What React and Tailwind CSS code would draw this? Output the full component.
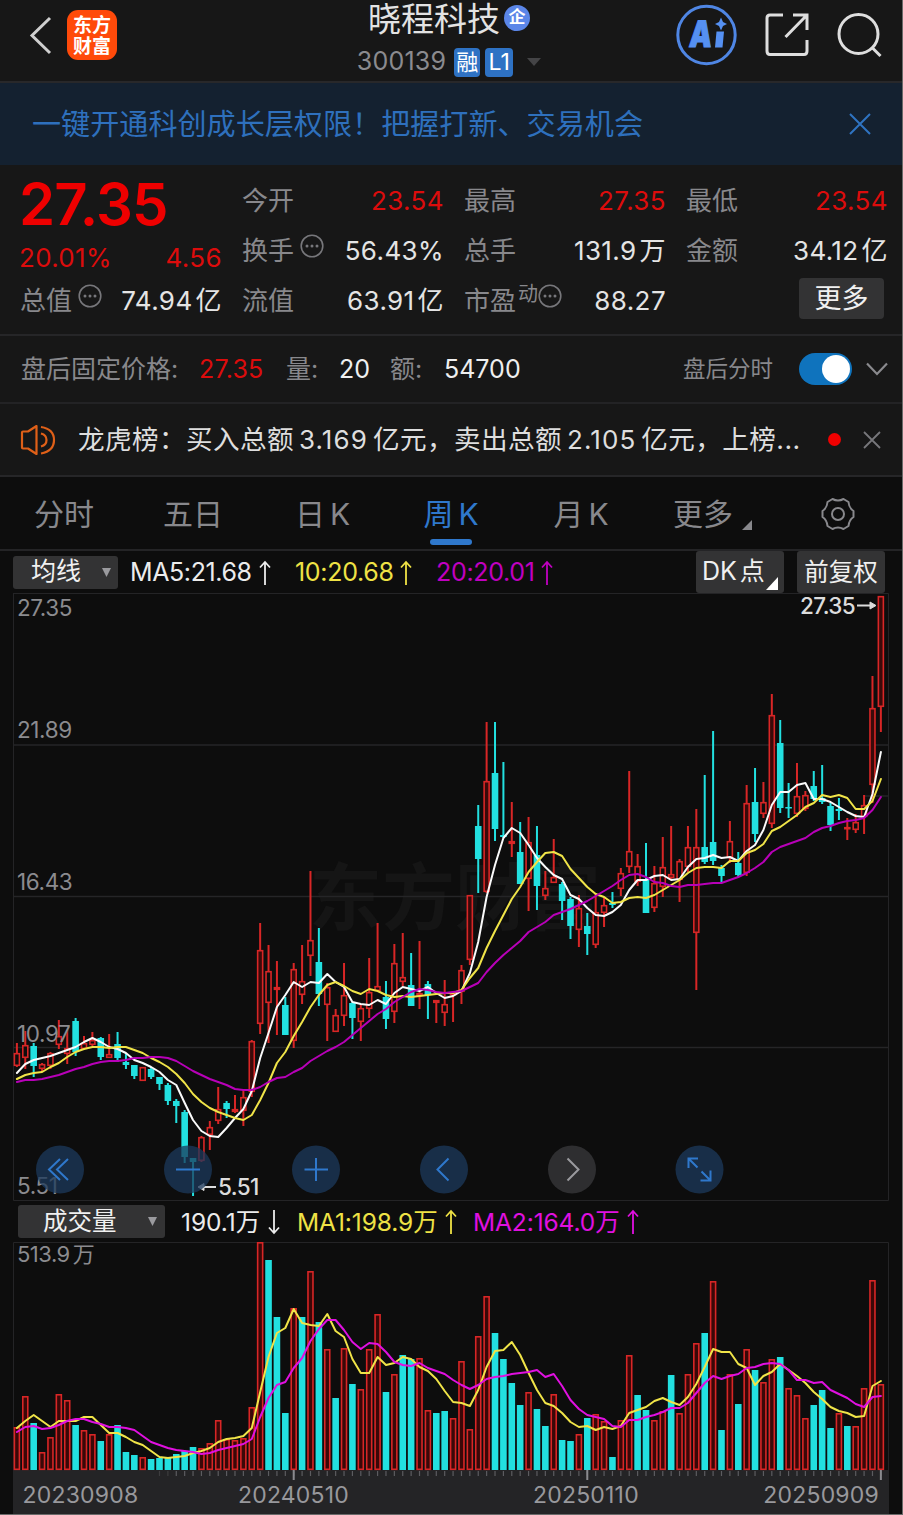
import React from 'react';

const RED = '#d82626';
const CYAN = '#22e0e0';
const STEP = 8.388;
const FIRST = 16.9;
const BASE = 1470;

const xOf = (i) => FIRST + i * STEP;

// [up?, high, bodyTop, bodyBottom, low]
const candles = [
  [1, 1043, 1053, 1066, 1067], [1, 1031, 1045, 1058, 1069], [0, 1043, 1046, 1066, 1077], [1, 1063, 1064, 1069, 1071],
  [1, 1052, 1053, 1066, 1069], [1, 1020, 1036, 1045, 1049], [1, 1030, 1048, 1054, 1064], [0, 1018, 1021, 1052, 1056],
  [1, 1036, 1043, 1049, 1050], [1, 1032, 1040, 1045, 1046], [0, 1037, 1038, 1057, 1060], [1, 1034, 1054, 1058, 1058],
  [0, 1032, 1044, 1058, 1062], [0, 1053, 1062, 1065, 1069], [0, 1065, 1065, 1076, 1079], [1, 1067, 1067, 1081, 1081],
  [0, 1067, 1069, 1077, 1079], [0, 1077, 1077, 1084, 1090], [0, 1083, 1085, 1101, 1105], [0, 1099, 1101, 1106, 1123],
  [0, 1110, 1112, 1157, 1163], [0, 1158, 1158, 1162, 1196], [1, 1136, 1137, 1161, 1162], [1, 1121, 1127, 1135, 1150],
  [1, 1087, 1109, 1121, 1124], [0, 1101, 1103, 1109, 1118], [1, 1095, 1109, 1112, 1113], [1, 1090, 1097, 1111, 1126],
  [1, 1040, 1041, 1092, 1097], [1, 923, 950, 1024, 1034], [1, 945, 971, 1003, 1043], [1, 961, 987, 990, 1035],
  [0, 997, 1005, 1035, 1035], [1, 963, 969, 1041, 1048], [1, 945, 981, 995, 1004], [1, 871, 940, 956, 976],
  [0, 928, 962, 994, 1006], [1, 983, 987, 1005, 1041], [1, 1009, 1015, 1032, 1032], [1, 963, 995, 1016, 1026],
  [0, 1002, 1003, 1018, 1039], [1, 1004, 1008, 1022, 1041], [1, 958, 992, 1009, 1018], [1, 923, 986, 991, 991],
  [0, 981, 997, 1019, 1029], [1, 944, 963, 1012, 1023], [1, 933, 977, 982, 986], [0, 953, 985, 1006, 1006],
  [1, 941, 993, 996, 1009], [0, 981, 984, 995, 1019], [1, 1000, 1000, 1003, 1023], [1, 980, 1004, 1013, 1026],
  [1, 992, 993, 995, 1022], [1, 965, 970, 992, 1004], [1, 895, 895, 960, 965], [0, 805, 826, 859, 893],
  [1, 722, 781, 892, 893], [0, 722, 773, 829, 841], [0, 762, 835, 837, 838], [1, 802, 841, 844, 857],
  [0, 822, 852, 884, 884], [1, 817, 842, 879, 911], [0, 826, 855, 886, 910], [1, 871, 888, 896, 900],
  [1, 839, 877, 883, 883], [0, 882, 884, 901, 920], [0, 897, 899, 926, 939], [1, 895, 908, 930, 947],
  [0, 913, 926, 934, 955], [1, 893, 912, 945, 948], [1, 897, 905, 913, 927], [0, 892, 903, 905, 908],
  [1, 868, 873, 889, 896], [1, 771, 851, 867, 873], [1, 854, 866, 882, 886], [0, 843, 880, 913, 913],
  [1, 866, 883, 908, 912], [1, 837, 867, 887, 897], [1, 826, 874, 878, 880], [1, 859, 861, 880, 902],
  [1, 826, 847, 867, 872], [1, 809, 847, 933, 990], [0, 775, 847, 862, 864], [0, 731, 842, 861, 865],
  [0, 865, 868, 876, 882], [1, 821, 841, 858, 863], [0, 852, 863, 875, 877], [1, 785, 803, 873, 876],
  [0, 768, 802, 834, 842], [1, 782, 802, 814, 818], [1, 694, 715, 824, 828], [0, 720, 743, 808, 813],
  [0, 783, 807, 808, 818], [1, 763, 796, 814, 817], [1, 791, 795, 809, 811], [0, 771, 786, 799, 801],
  [0, 765, 798, 802, 804], [0, 803, 806, 825, 831], [0, 798, 809, 811, 820], [1, 818, 827, 829, 840],
  [1, 814, 822, 830, 833], [1, 795, 805, 817, 834], [1, 676, 708, 785, 803], [1, 596, 596, 707, 732],
];

const ma5 = [
  1073, 1064, 1060, 1058, 1056, 1053, 1050, 1047, 1042, 1038, 1042, 1047, 1049, 1053, 1060, 1063, 1067, 1072, 1080, 1085,
  1103, 1120, 1131, 1136, 1137, 1128, 1118, 1109, 1091, 1058, 1033, 1007, 995, 982, 987, 982, 983, 974, 982, 987,
  1002, 1004, 1005, 1000, 1004, 993, 987, 989, 991, 987, 993, 998, 996, 991, 973, 942, 897, 865, 838, 828,
  833, 845, 858, 867, 875, 879, 895, 899, 908, 915, 916, 912, 905, 890, 880, 880, 876, 875, 880, 879,
  867, 859, 858, 855, 858, 857, 861, 851, 845, 830, 805, 792, 792, 785, 783, 799, 799, 802, 807, 812,
  816, 817, 794, 752,
];
const ma10 = [
  1079, 1075, 1073, 1072, 1067, 1063, 1057, 1052, 1049, 1047, 1047, 1048, 1047, 1047, 1050, 1053, 1058, 1062, 1067, 1074,
  1083, 1094, 1102, 1108, 1112, 1115, 1118, 1120, 1115, 1100, 1083, 1063, 1052, 1036, 1022, 1007, 995, 985, 982, 986,
  991, 994, 989, 991, 995, 997, 996, 997, 996, 995, 994, 993, 993, 990, 978, 968, 948, 931, 915, 899,
  887, 872, 862, 853, 852, 856, 869, 878, 887, 894, 897, 903, 902, 898, 897, 898, 895, 890, 885, 880,
  873, 868, 867, 867, 868, 861, 861, 853, 850, 844, 831, 827, 821, 815, 807, 803, 795, 797, 795, 798,
  809, 809, 801, 779,
];
const ma20 = [
  1082, 1080, 1080, 1079, 1077, 1075, 1072, 1069, 1067, 1064, 1062, 1061, 1061, 1060, 1058, 1058, 1057, 1057, 1058, 1061,
  1066, 1071, 1075, 1079, 1082, 1085, 1089, 1090, 1090, 1087, 1082, 1078, 1077, 1072, 1068, 1061, 1056, 1051, 1047, 1042,
  1035, 1028, 1021, 1014, 1009, 1002, 997, 992, 989, 990, 992, 993, 992, 991, 987, 983, 972, 963, 955, 948,
  941, 932, 927, 922, 915, 912, 909, 905, 901, 896, 891, 886, 880, 875, 874, 877, 882, 883, 886, 887,
  885, 885, 884, 883, 883, 880, 877, 873, 868, 862, 852, 847, 844, 841, 838, 832, 828, 826, 823, 821,
  820, 818, 810, 797,
];

// [up?, top]
const volumes = [
  [1, 1427], [1, 1396], [0, 1423], [1, 1452], [1, 1437], [1, 1394], [1, 1400], [0, 1425], [1, 1430], [1, 1434],
  [0, 1441], [1, 1434], [0, 1425], [0, 1452], [0, 1455], [1, 1457], [0, 1459], [0, 1458], [0, 1458], [0, 1454],
  [0, 1451], [0, 1447], [1, 1448], [1, 1443], [1, 1420], [1, 1439], [1, 1440], [1, 1438], [1, 1407], [1, 1242],
  [0, 1260], [0, 1317], [0, 1413], [1, 1308], [0, 1317], [1, 1271], [0, 1322], [1, 1349], [0, 1398], [1, 1348],
  [0, 1384], [1, 1389], [1, 1349], [1, 1314], [0, 1392], [1, 1374], [0, 1355], [0, 1359], [1, 1358], [1, 1410],
  [0, 1413], [0, 1411], [1, 1418], [1, 1361], [1, 1429], [1, 1336], [1, 1296], [0, 1333], [0, 1359], [0, 1383],
  [0, 1405], [1, 1392], [0, 1409], [0, 1426], [1, 1394], [0, 1440], [0, 1441], [1, 1434], [0, 1418], [1, 1414],
  [1, 1421], [0, 1457], [1, 1420], [1, 1355], [0, 1395], [0, 1410], [1, 1420], [1, 1411], [0, 1375], [1, 1413],
  [1, 1374], [1, 1343], [0, 1333], [1, 1281], [0, 1430], [1, 1374], [0, 1404], [1, 1349], [0, 1370], [1, 1382],
  [1, 1359], [0, 1357], [1, 1388], [1, 1395], [1, 1418], [0, 1405], [0, 1390], [0, 1428], [1, 1413], [0, 1426],
  [1, 1426], [1, 1388], [1, 1280], [1, 1384],
];
const volMa1 = [
  1428, 1421, 1415, 1421, 1427, 1421, 1421, 1421, 1417, 1417, 1425, 1433, 1433, 1437, 1442, 1445, 1451, 1457, 1458, 1457,
  1456, 1453, 1451, 1448, 1442, 1439, 1438, 1436, 1428, 1392, 1357, 1333, 1328, 1309, 1323, 1325, 1326, 1314, 1331, 1337,
  1359, 1373, 1373, 1357, 1365, 1363, 1357, 1359, 1367, 1371, 1379, 1391, 1402, 1403, 1406, 1390, 1367, 1351, 1350, 1342,
  1355, 1373, 1390, 1403, 1406, 1413, 1422, 1427, 1426, 1430, 1427, 1429, 1426, 1413, 1410, 1407, 1401, 1398, 1402, 1405,
  1397, 1384, 1367, 1349, 1352, 1352, 1364, 1368, 1385, 1376, 1372, 1364, 1370, 1376, 1383, 1392, 1399, 1407, 1411, 1413,
  1417, 1416, 1386, 1381,
];
const volMa2 = [
  1432, 1427, 1426, 1429, 1428, 1425, 1421, 1419, 1419, 1422, 1424, 1427, 1427, 1428, 1430, 1436, 1442, 1445, 1448, 1450,
  1451, 1452, 1454, 1453, 1450, 1448, 1446, 1444, 1439, 1417, 1398, 1385, 1382, 1368, 1358, 1341, 1329, 1320, 1320, 1330,
  1342, 1349, 1343, 1344, 1352, 1362, 1365, 1366, 1363, 1368, 1371, 1374, 1380, 1385, 1389, 1385, 1379, 1377, 1376, 1374,
  1373, 1372, 1370, 1377, 1374, 1386, 1400, 1409, 1415, 1417, 1419, 1426, 1427, 1420, 1420, 1417, 1415, 1412, 1408, 1408,
  1403, 1393, 1383, 1376, 1379, 1376, 1374, 1368, 1367, 1364, 1363, 1364, 1370, 1380, 1380, 1383, 1382, 1390, 1394, 1398,
  1404, 1407, 1397, 1396,
];

const linePoints = (arr) => arr.map((y, i) => `${xOf(i).toFixed(1)},${y}`).join(' ');

function Line({ data, color }) {
  return (
    <polyline points={linePoints(data)} fill="none" stroke={color} strokeWidth="2" strokeLinejoin="round" strokeLinecap="round" />
  );
}

function Candle({ i, data }) {
  const [up, high, top, bottom, low] = data;
  const x = xOf(i);
  if (!up) {
    return (
      <g fill={CYAN}>
        <rect x={x - 1} y={high} width="2" height={Math.max(low - high, 1)} />
        <rect x={x - 3.3} y={top} width="6.6" height={Math.max(bottom - top, 1.5)} />
      </g>
    );
  }
  return (
    <g stroke={RED}>
      <path d={`M${x} ${high}V${top}M${x} ${bottom}V${low}`} strokeWidth="2" />
      <rect
        x={x - 2.5}
        y={top + 0.7}
        width="5"
        height={Math.max(bottom - top - 1.4, 1)}
        fill={bottom - top > 50 ? '#3a0a0a' : '#0d0d0d'}
        strokeWidth="1.6"
      />
    </g>
  );
}

function Dots() {
  return (
    <svg width="24" height="24" viewBox="0 0 24 24" className="shrink-0" fill="none" stroke="#77777b" strokeWidth="1.6">
      <circle cx="12" cy="12" r="10.8" />
      <g fill="#77777b" stroke="none">
        <circle cx="7" cy="12" r="1.5" />
        <circle cx="12" cy="12" r="1.5" />
        <circle cx="17" cy="12" r="1.5" />
      </g>
    </svg>
  );
}

function Arrow({ down }) {
  return (
    <svg
      width="12"
      height="26"
      viewBox="0 0 12 26"
      className={down ? 'shrink-0 rotate-180' : 'shrink-0'}
      fill="none"
      stroke="currentColor"
      strokeWidth="1.8"
    >
      <path d="M6 25V2M1 7.5L6 2l5 5.5" />
    </svg>
  );
}

function Stat({ label, extra, value, unit, red }) {
  return (
    <div className="flex h-[50px] items-center justify-between">
      <div className="flex items-center text-[#88888c]">
        {label}
        {extra}
      </div>
      <div className={red ? 'flex text-[#dc0c0c] tracking-[0.4px]' : 'flex text-[#e4e4e4] tracking-[0.4px]'}>
        {value}
        {unit && <span className="ml-[3px]">{unit}</span>}
      </div>
    </div>
  );
}

function Header() {
  return (
    <header className="flex h-[83px] border-b-2 border-[#28282a] bg-[#171717]">
      <div className="flex w-[340px] items-start pt-[10px] pl-[28px]">
        <svg width="26" height="50" viewBox="0 0 26 50" fill="none" stroke="#cfcfcf" strokeWidth="3">
          <path d="M22 8L4 25.5L22 43" />
        </svg>
        <div className="ml-[13px] h-[50px] w-[50px] rounded-[11px] bg-[#ff4a0a] pt-[5px] text-center text-[19px] leading-[21px] font-bold text-white">
          东方
          <br />
          财富
        </div>
      </div>
      <div className="flex w-[218px] flex-col items-center">
        <div className="flex h-[38px] items-center">
          <span className="text-[33px] leading-[36px] text-[#e3e3e3]">晓程科技</span>
          <span className="mb-[2px] ml-[4px] flex h-[26px] w-[26px] items-center justify-center rounded-full bg-[#5b86e8] text-[17px] font-bold text-white">
            企
          </span>
        </div>
        <div className="mt-[9px] flex h-[30px] items-center text-[25px]">
          <span className="text-[#8b8b8f] tracking-[0.2px]">300139</span>
          <span className="ml-[8px] flex h-[29px] w-[26px] items-center justify-center rounded-[4px] bg-[#2e72c4] text-[22px] text-white">
            融
          </span>
          <span className="ml-[5px] flex h-[29px] w-[28px] items-center justify-center rounded-[4px] bg-[#2e72c4] text-[23px] text-white">
            L1
          </span>
          <svg width="14" height="8" viewBox="0 0 14 8" className="ml-[14px]" fill="#444446">
            <path d="M0 0H14L7 8Z" />
          </svg>
        </div>
      </div>
      <div className="flex items-start pl-[116px]">
        <svg width="66" height="70" viewBox="674 0 66 70">
          <circle cx="706.5" cy="35" r="28.7" fill="none" stroke="#4f86e4" strokeWidth="3" />
          <text
            fontSize="33"
            fontWeight="900"
            fill="#5590f2"
            stroke="#5590f2"
            strokeWidth="1"
            transform="translate(688.5 47) skewX(-5) scale(0.86 1.1)"
          >
            A
          </text>
          <path d="M716.5 31.5H724L722.5 47.500H715Z" fill="#5590f2" />
          <path d="M721 17.500L723 22L727 24L723 26L721 30.500L719 26L715 24L719 22Z" fill="#5590f2" />
        </svg>
        <svg width="50" height="70" viewBox="762 0 50 70" className="ml-[22px]" fill="none" stroke="#dedede" strokeWidth="3">
          <path d="M783 15H770Q767 15 767 18V51Q767 54.500 770 54.500H804Q807 54.500 807 51V40" />
          <path d="M785.500 37L806 16M793 15H807V30" />
        </svg>
        <svg width="50" height="70" viewBox="834 0 50 70" className="ml-[22px]" fill="none" stroke="#dedede" strokeWidth="3">
          <circle cx="858.500" cy="34" r="19.500" />
          <path d="M871.500 47L880.500 56" />
        </svg>
      </div>
    </header>
  );
}

function Quote() {
  return (
    <section className="grid h-[171px] grid-cols-4 gap-x-5 border-b-2 border-[#262628] px-5 pt-[11px] pr-[14px] text-[26px] leading-none">
      <div>
        <div className="flex h-[55px] items-center text-[58px] font-semibold tracking-[-0.8px] text-[#ee0000]">
          <span className="-ml-px">27.35</span>
        </div>
        <div className="flex h-[53px] items-center justify-between text-[#dc0c0c]">
          <span className="-ml-px tracking-[0.3px]">20.01%</span>
          <span className="tracking-[0.4px]">4.56</span>
        </div>
        <div className="flex h-[34px] items-center justify-between">
          <span className="text-[#88888c]">总值</span>
          <span className="mr-auto mb-[10px] ml-[6px]">
            <Dots />
          </span>
          <span className="text-[#e4e4e4] tracking-[0.4px]">
            74.94<span className="ml-[3px]">亿</span>
          </span>
        </div>
      </div>
      <div>
        <Stat label="今开" value="23.54" red />
        <Stat label="换手" extra={<span className="mb-[10px] ml-[6px]"><Dots /></span>} value="56.43%" />
        <Stat label="流值" value="63.91" unit="亿" />
      </div>
      <div>
        <Stat label="最高" value="27.35" red />
        <Stat label="总手" value="131.9" unit="万" />
        <Stat
          label="市盈"
          extra={
            <span className="mb-[10px] flex items-center">
              <span className="mb-[4px] ml-[2px] text-[20px]">动</span>
              <Dots />
            </span>
          }
          value="88.27"
        />
      </div>
      <div>
        <Stat label="最低" value="23.54" red />
        <Stat label="金额" value="34.12" unit="亿" />
        <div className="flex h-[45px] items-center justify-end pr-[4px]">
          <button className="h-[41px] w-[85px] rounded-[4px] bg-[#333334] text-[27px] text-[#f0f0f0]">更多</button>
        </div>
      </div>
    </section>
  );
}

function AfterHours() {
  return (
    <section className="flex h-[68px] items-center border-b-2 border-[#232325] pl-[21px] text-[25px] text-[#88888c]">
      <span className="w-[178px] pt-[2px]">盘后固定价格:</span>
      <span className="w-[87px] pt-[2px] text-[#dc0c0c] tracking-[0.2px]">27.35</span>
      <span className="w-[53px] pt-[2px]">量:</span>
      <span className="w-[51px] pt-[2px] text-[#efefef]">20</span>
      <span className="w-[54px] pt-[2px]">额:</span>
      <span className="w-[239px] pt-[2px] text-[#efefef]">54700</span>
      <span className="w-[116px] text-[22.500px]">盘后分时</span>
      <span className="flex h-[32px] w-[53px] items-center justify-end rounded-full bg-[#0f73bd] pr-[2px]">
        <span className="h-[28px] w-[28px] rounded-full bg-white" />
      </span>
      <svg width="22" height="14" viewBox="0 0 22 14" className="ml-[14px]" fill="none" stroke="#8a8a8e" strokeWidth="2.200">
        <path d="M1 1.500L11 12L21 1.500" />
      </svg>
    </section>
  );
}

function News() {
  return (
    <section className="flex h-[73px] items-center border-b-2 border-[#262628] pl-[20px] text-[26.600px] text-[#dedede]">
      <svg width="36" height="30" viewBox="0 0 36 30" fill="none" stroke="#e06018" strokeWidth="2.200" strokeLinejoin="round">
        <path d="M2 7.500Q2 6.500 3 6.500H8L16.500 1V29L8 23.500H3Q2 23.500 2 22.500Z" />
        <path d="M21 8.500Q26.500 10 26.500 15Q26.500 20 21 21.500M21 2Q34 4 34 15Q34 26 21 28.500" />
      </svg>
      <div className="ml-[22px] w-[724px] whitespace-nowrap tracking-[0.4px]">
        龙虎榜：买入总额<span className="mx-[5px] text-[26px] tracking-[1.1px]">3.169</span>亿元，卖出总额
        <span className="mx-[5px] text-[26px] tracking-[1.1px]">2.105</span>亿元，上榜...
      </div>
      <span className="ml-[26px] h-[13px] w-[13px] rounded-full bg-[#f00000]" />
      <svg width="18" height="18" viewBox="0 0 18 18" className="ml-[22px]" stroke="#77777b" strokeWidth="1.800">
        <path d="M1 1L17 17M17 1L1 17" />
      </svg>
    </section>
  );
}

const tabs = [
  { name: '分时', w: 'w-[128px]' },
  { name: '五日', w: 'w-[130px]' },
  { name: '日', k: true, w: 'w-[129px]' },
  { name: '周', k: true, active: true, w: 'w-[128px]' },
  { name: '月', k: true, w: 'w-[132px]' },
];

function Tabs() {
  return (
    <nav className="flex h-[74px] border-b-2 border-[#242426] text-[30px] text-[#88888c]">
      {tabs.map((t) => (
        <div key={t.name} className={`${t.w} flex flex-col items-center`}>
          <span className={t.active ? 'mt-[15px] flex h-[44px] items-center text-[#2f78cc]' : 'mt-[15px] flex h-[44px] items-center'}>
            {t.name}
            {t.k && <span className="ml-[5px]">K</span>}
          </span>
          {t.active && <span className="mt-[3px] h-[6px] w-[42px] rounded-full bg-[#2f78cc]" />}
        </div>
      ))}
      <div className="mt-[15px] ml-[26px] flex h-[44px] w-[147px] items-center">
        更多
        <svg width="10" height="10" viewBox="0 0 10 10" className="mt-[22px] ml-[9px]" fill="#88888c">
          <path d="M10 0V10H0Z" />
        </svg>
      </div>
      <svg width="36" height="36" viewBox="0 0 36 36" className="mt-[19px]" fill="none" stroke="#88888c" strokeWidth="2" strokeLinejoin="round">
        <path d="M12.500 3Q18 6 23.500 3L28.500 6Q29 12 33.500 15V21Q29 24 28.500 30L23.500 33Q18 30 12.500 33L7.500 30Q7 24 2.500 21V15Q7 12 7.500 6Z" />
        <circle cx="18" cy="18" r="6" />
      </svg>
    </nav>
  );
}

function MaRow() {
  return (
    <div className="flex h-[42px] items-center pl-[13px] text-[25px]">
      <button className="flex h-[33px] w-[105px] items-center rounded-[3px] bg-[#333334] pl-[18px] text-[#f0f0f0]">
        均线
        <svg width="9" height="9" viewBox="0 0 9 9" className="ml-[21px]" fill="#9a9a9e">
          <path d="M0 0H9L4.500 9Z" />
        </svg>
      </button>
      <span className="ml-[12px] flex w-[165px] items-center gap-[7px] pt-[2px] text-[#ececec] tracking-[-0.4px]">
        MA5:21.68 <Arrow />
      </span>
      <span className="flex w-[141px] items-center gap-[6px] pt-[2px] text-[#efe245] tracking-[-0.3px]">
        10:20.68 <Arrow />
      </span>
      <span className="flex w-[260px] items-center gap-[6px] pt-[2px] text-[#c000c0] tracking-[-0.3px]">
        20:20.01 <Arrow />
      </span>
      <button className="flex h-[42px] w-[88px] items-center rounded-[3px] bg-[#333334] pl-[6px] text-[#f0f0f0]">
        DK<span className="ml-[3px]">点</span>
        <svg width="12" height="13" viewBox="0 0 12 13" className="mt-[22px] ml-[1px] shrink-0" fill="#fff">
          <path d="M12 0V13H0Z" />
        </svg>
      </button>
      <button className="ml-[13px] h-[42px] w-[88px] rounded-[3px] bg-[#333334] text-[24.500px] text-[#f0f0f0]">前复权</button>
    </div>
  );
}

function PriceChart() {
  return (
    <svg width="902" height="608" viewBox="0 593 902 608" className="block">
      <text x="455" y="924" fontSize="73" fontWeight="700" fill="#151515" textAnchor="middle">
        东方财富
      </text>
      <path d="M13 593.500H888.500V1200.500H13.500V593.500" fill="none" stroke="#242426" />
      <g stroke="#252527" strokeWidth="1.500">
        <path d="M13 745H888M13 896.500H888M13 1047.500H888M865 796H888" />
      </g>
      {candles.map((c, i) => (
        <Candle key={i} i={i} data={c} />
      ))}
      <g fontSize="22.500" fill="#8b8b8f" letterSpacing="-0.4">
        <text x="17" y="616">27.35</text>
        <text x="17" y="738">21.89</text>
        <text x="17" y="890">16.43</text>
        <text x="17" y="1042">10.97</text>
        <text x="17" y="1194">5.51</text>
      </g>
      <Line data={ma5} color="#fafafa" />
      <Line data={ma10} color="#f0e448" />
      <Line data={ma20} color="#b800b8" />
      <g fontSize="22.500" fontWeight="500" fill="#dcdcdc" letterSpacing="-0.6">
        <text x="800" y="614">27.35</text>
        <text x="218" y="1195">5.51</text>
      </g>
      <g stroke="#dcdcdc" strokeWidth="2" fill="#dcdcdc">
        <path d="M857 605.500H870" />
        <path d="M870 602L876 605.500L870 609Z" strokeWidth="1" />
        <path d="M204 1187H216" />
        <path d="M204 1183.500L198 1187L204 1190.500Z" strokeWidth="1" />
      </g>
      <g fill="#1c3a5c" fillOpacity="0.75">
        <circle cx="60" cy="1169.500" r="24" />
        <circle cx="188" cy="1169.500" r="24" />
        <circle cx="316" cy="1169.500" r="24" />
        <circle cx="444" cy="1169.500" r="24" />
        <circle cx="699.500" cy="1169.500" r="24" />
      </g>
      <circle cx="572" cy="1169.500" r="24" fill="#2e2e30" />
      <g fill="none" stroke="#2f78cc" strokeWidth="2">
        <path d="M60 1159L49 1169.500L60 1180M68 1159L57 1169.500L68 1180" />
        <path d="M176 1169.500H200M304.500 1169.500H328M316 1158V1181" />
        <path d="M448.500 1158.500L437.500 1169.500L448.500 1180.500" />
        <path d="M688.500 1168V1158.500H698M688.500 1158.500L697.500 1167.500M710.500 1170.500V1180.500H700.500M710.500 1180.500L701.500 1171.500" />
      </g>
      <path d="M567.500 1158.500L578.500 1169.500L567.500 1180.500" fill="none" stroke="#9a9a9e" strokeWidth="2" />
    </svg>
  );
}

function VolumeRow() {
  return (
    <div className="flex h-[41px] items-center pl-[18px] text-[24.500px]">
      <button className="flex h-[33px] w-[147px] items-center rounded-[3px] bg-[#333334] pl-[25px] text-[#f0f0f0]">
        成交量
        <svg width="9" height="9" viewBox="0 0 9 9" className="ml-[31px]" fill="#9a9a9e">
          <path d="M0 0H9L4.500 9Z" />
        </svg>
      </button>
      <span className="ml-[16px] flex w-[116px] items-center gap-[8px] pt-px text-[#ececec] tracking-[-0.05px]">
        190.1万 <Arrow down />
      </span>
      <span className="flex w-[176px] items-center gap-[7px] pt-px text-[#efe245] tracking-[-0.1px]">
        MA1:198.9万 <Arrow />
      </span>
      <span className="flex items-center gap-[7px] pt-px text-[#e010e0] tracking-[-0.1px]">
        MA2:164.0万 <Arrow />
      </span>
    </div>
  );
}

function VolumeChart() {
  return (
    <svg width="902" height="272" viewBox="0 1242 902 272" className="block">
      <rect x="13" y="1470" width="876" height="44" fill="#242426" />
      <path d="M13.500 1470V1242.500H888.500V1470" fill="none" stroke="#242426" />
      <text x="17" y="1262" fontSize="22" fill="#8b8b8f" letterSpacing="-0.5">
        513.9
        <tspan dx="3">万</tspan>
      </text>
      {volumes.map(([up, top], i) =>
        up ? (
          <rect
            key={i}
            x={xOf(i) - 2.5}
            y={top + 0.8}
            width="5"
            height={BASE - top - 1.5}
            fill="#3a0808"
            stroke={RED}
            strokeWidth="1.600"
          />
        ) : (
          <rect key={i} x={xOf(i) - 3.3} y={top} width="6.600" height={BASE - top} fill={CYAN} />
        )
      )}
      <Line data={volMa1} color="#f0e448" />
      <Line data={volMa2} color="#e010e0" />
      {volumes.map((v, i) =>
        i < 17 ? null : (
          <path key={i} d={`M${xOf(i)} 1471V1476`} stroke={i < 19 ? '#3c3c3e' : '#5c5c60'} strokeWidth="1.200" />
        )
      )}
      <path d={`M${xOf(33)} 1470V1480M${xOf(68)} 1470V1480M${xOf(103)} 1470V1480`} stroke="#8a8a8e" strokeWidth="2" />
      <g fontSize="23" fill="#98989c" letterSpacing="0.2">
        <text x="22.500" y="1503">20230908</text>
        <text x="238" y="1503">20240510</text>
        <text x="533" y="1503">20250110</text>
        <text x="879" y="1503" textAnchor="end">20250909</text>
      </g>
    </svg>
  );
}

export default function App() {
  return (
    <div
      lang="zh-CN"
      className="h-[1515px] w-[903px] overflow-hidden border-r border-b border-[#6a6a6a] bg-[#0d0d0d] font-['Inter','Noto_Sans_CJK_SC',sans-serif]"
    >
      <div className="bg-[#171717]">
        <Header />
        <div className="flex h-[82px] items-center justify-between bg-[#142130] pr-[31px] pl-[32px] text-[29.100px] text-[#2e70bd]">
          <span className="pt-[2px]">一键开通科创成长层权限！把握打新、交易机会</span>
          <svg width="22" height="22" viewBox="0 0 22 22" stroke="#2f74c2" strokeWidth="2">
            <path d="M1 1L21 21M21 1L1 21" />
          </svg>
        </div>
        <Quote />
        <AfterHours />
        <News />
      </div>
      <Tabs />
      <MaRow />
      <PriceChart />
      <VolumeRow />
      <VolumeChart />
    </div>
  );
}
